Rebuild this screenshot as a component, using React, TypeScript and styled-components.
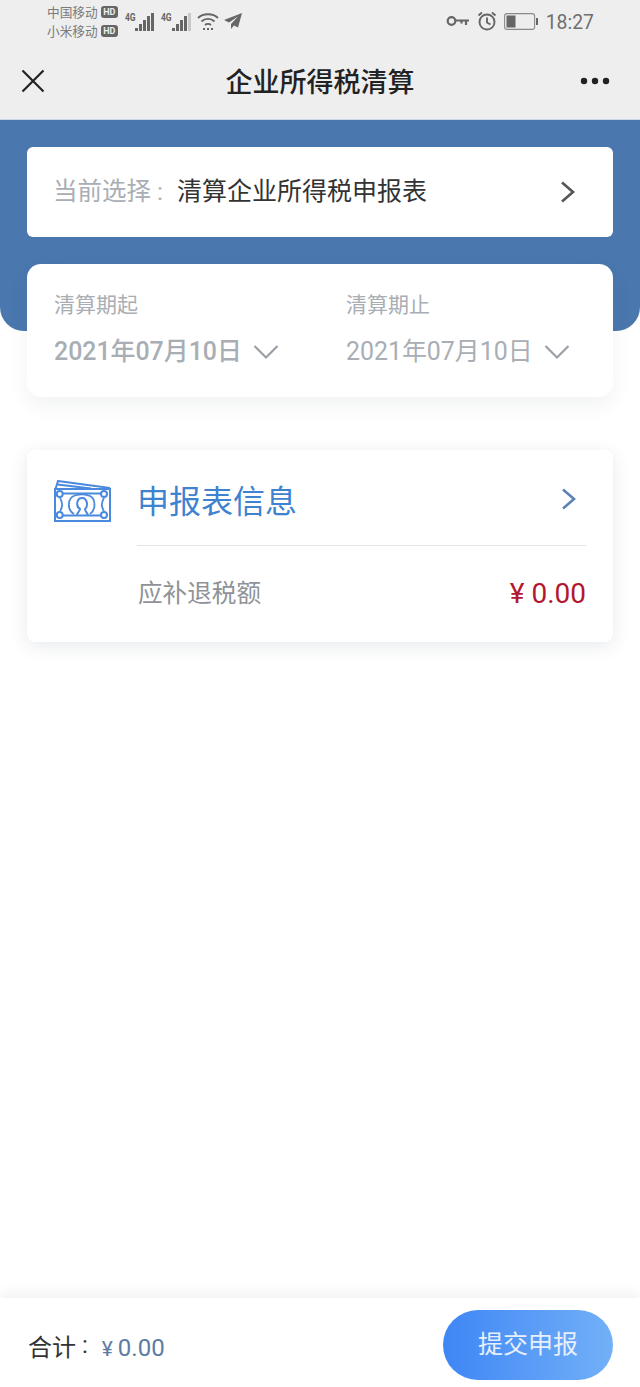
import styled, { createGlobalStyle } from "styled-components";

const GlobalStyle = createGlobalStyle`
  html, body {
    margin: 0;
    padding: 0;
    background: #ffffff;
  }
  * {
    box-sizing: border-box;
  }
`;

const Page = styled.div`
  width: 640px;
  height: 1387px;
  display: flex;
  flex-direction: column;
  overflow: hidden;
  background: #ffffff;
  font-family: Roboto, "Noto Sans CJK SC", sans-serif;
`;

const TopArea = styled.div`
  height: 120px;
  display: flex;
  flex-direction: column;
  background: #eeeeee;
  border-bottom: 1px solid #c9d6e6;
`;

const StatusBar = styled.div`
  height: 42px;
  padding: 0 46px 0 47px;
  display: flex;
  align-items: center;
  justify-content: space-between;
  color: #777777;
`;

const StatusLeft = styled.div`
  display: flex;
  align-items: center;
`;

const StatusRight = styled.div`
  display: flex;
  align-items: center;
  gap: 7px;
`;

const Carriers = styled.div`
  display: flex;
  flex-direction: column;
  margin-right: 6px;
`;

const Carrier = styled.div`
  display: flex;
  align-items: center;
  gap: 3px;
  height: 19px;
  font-size: 12.7px;
  color: #7b7b7b;
`;

const HdBadge = styled.span`
  width: 17px;
  height: 12px;
  border-radius: 3px;
  background: #666666;
  color: #eeeeee;
  font-size: 9px;
  font-weight: 700;
  line-height: 12px;
  text-align: center;
`;

const Signal = styled.div`
  display: flex;
  align-items: flex-end;
  gap: 1px;
  height: 19px;
  margin-right: 6px;
`;

const NetLabel = styled.span`
  align-self: flex-start;
  margin-right: -2px;
  font-size: 10px;
  font-weight: 700;
  line-height: 12px;
  color: #666666;
  transform: scaleX(0.85);
`;

const Bar = styled.span<{ $h: number; $dim?: boolean }>`
  width: 3px;
  height: ${(p) => p.$h}px;
  background: ${(p) => (p.$dim ? "#c8c8c8" : "#666666")};
`;

const PlaneIcon = styled.svg`
  margin-left: 5px;
`;

const Clock = styled.span`
  margin: 2px 0 0 1px;
  font-size: 19.4px;
  color: #6f6f6f;
`;

const NavBar = styled.div`
  flex: 1;
  padding: 0 30px;
  display: grid;
  grid-template-columns: 1fr auto 1fr;
  align-items: center;
`;

const NavClose = styled.div`
  display: flex;
  margin-left: -9px;
`;

const NavTitle = styled.div`
  font-size: 27px;
  font-weight: 500;
  color: #222222;
`;

const NavMore = styled.div`
  display: flex;
  justify-content: flex-end;
`;

const Hero = styled.div`
  height: 211px;
  padding: 27px 27px 0;
  display: flex;
  flex-direction: column;
  gap: 27px;
  background: #4a77ae;
  border-radius: 0 0 24px 24px;
`;

const SelectCard = styled.div`
  flex: none;
  height: 90px;
  padding: 0 38px 0 26px;
  display: flex;
  align-items: center;
  background: #ffffff;
  border-radius: 6px;
  font-size: 25px;
`;

const SelectLabel = styled.span`
  margin: 0 14px 6px 0;
  color: #a9aeb4;
  font-size: 24.5px;
`;

const Colon = styled.span`
  margin-left: 6px;
`;

const SelectValue = styled.span`
  flex: 1;
  margin-bottom: 6px;
  color: #333333;
`;

const DateCard = styled.div`
  flex: none;
  height: 133px;
  padding: 26px 27px 0;
  display: grid;
  grid-template-columns: 292px 1fr;
  background: #ffffff;
  border-radius: 14px;
  box-shadow: 0 8px 20px rgba(60, 70, 90, 0.07);
`;

const DateField = styled.div`
  display: flex;
  flex-direction: column;
  gap: 14px;
`;

const DateLabel = styled.div`
  font-size: 21px;
  line-height: 30px;
  color: #a9aeb4;
`;

const DateValue = styled.div<{ $light?: boolean }>`
  display: flex;
  align-items: center;
  gap: 11px;
  font-size: 24.9px;
  line-height: 36px;
  font-weight: ${(p) => (p.$light ? 400 : 500)};
  color: #a8aeb4;
`;

const Content = styled.div`
  flex: 1;
  padding: 119px 27px 0;
`;

const InfoCard = styled.div`
  height: 192px;
  padding: 0 27px 0 26px;
  display: grid;
  grid-template-columns: 84px 1fr;
  background: #ffffff;
  border-radius: 8px;
  box-shadow: 0 4px 18px rgba(60, 70, 90, 0.12);
`;

const IconCell = styled.div`
  padding-top: 30px;
`;

const InfoBody = styled.div`
  display: flex;
  flex-direction: column;
`;

const InfoHead = styled.div`
  height: 96px;
  display: flex;
  align-items: center;
  justify-content: space-between;
  border-bottom: 1px solid #e2e4e6;
  padding: 3px 10px 0 0;
`;

const InfoTitle = styled.div`
  font-size: 32px;
  color: #3f82d0;
`;

const InfoRow = styled.div`
  flex: 1;
  display: flex;
  align-items: center;
  justify-content: space-between;
`;

const InfoLabel = styled.div`
  margin: 0 0 7px 1px;
  font-size: 24.6px;
  color: #8f9398;
`;

const Amount = styled.div`
  margin-bottom: 2px;
  font-size: 28px;
  color: #b3172f;
`;

const Footer = styled.div`
  height: 89px;
  padding: 12px 27px 7px 28px;
  display: flex;
  align-items: center;
  justify-content: space-between;
  background: #ffffff;
  box-shadow: 0 -4px 12px rgba(40, 40, 40, 0.07);
`;

const Total = styled.div`
  display: flex;
  align-items: center;
  font-size: 24px;
  color: #333333;
`;

const TotalValue = styled.span`
  margin: 5px 0 0 14px;
  font-size: 24px;
  color: #5d7ba3;
`;

const Yen = styled.span`
  margin-right: 5px;
  font-size: 21px;
`;

const SubmitButton = styled.button`
  width: 170px;
  height: 70px;
  border: 0;
  border-radius: 35px;
  background: linear-gradient(90deg, #3f86f6, #72b0f7);
  color: #e6f0fd;
  font-family: inherit;
  font-size: 25px;
  padding: 0 0 6px;
`;

const Signals = ({ dim }: { dim: number }) => (
  <Signal>
    <NetLabel>4G</NetLabel>
    {[3, 7, 11, 15, 18].map((h, i) => (
      <Bar key={h} $h={h} $dim={i >= 5 - dim} />
    ))}
  </Signal>
);

const DateChevron = () => (
  <svg width="26" height="16" viewBox="0 0 26 16" fill="none" stroke="#9aa0a6" strokeWidth="2.2">
    <path d="M1.5 2 L13 13.5 L24.5 2" />
  </svg>
);

const RightChevron = ({ color }: { color: string }) => (
  <svg width="15" height="24" viewBox="0 0 15 24" fill="none" stroke={color} strokeWidth="2.6">
    <path d="M2 2.5 L13 12 L2 21.5" />
  </svg>
);

const MoneyIcon = () => (
  <svg width="58" height="42" viewBox="0 0 58 42" fill="none" stroke="#4a8ade" strokeWidth="2">
    <path d="M2 9 H57 V41 H2 Z" />
    <path d="M2.5 9 L5 1 L57 8" />
    <path d="M4.5 4.5 L38 8.5" />
    <circle cx="6.7" cy="14" r="3" />
    <circle cx="51" cy="14" r="3" />
    <circle cx="6.7" cy="35" r="3" />
    <circle cx="51" cy="35" r="3" />
    <path d="M10 13.5 H48 M10 35.5 H48" strokeWidth="1.8" />
    <path d="M7 18 C10 23 10 27 7 31 M51 18 C48 23 48 27 51 31" strokeWidth="1.8" />
    <path d="M21 34 C14 30 14 18 22 15.5 C27 14 33 14 37 16 C43 19 43 30 37 34" strokeWidth="1.8" />
    <path d="M24 35 C25 31 27 31 27 29 C23 27 23 18 29 18 C35 18 35 27 32 29 C32 31 33 31 35 35" />
  </svg>
);

export default function App() {
  return (
    <Page>
      <GlobalStyle />
      <TopArea>
        <StatusBar>
          <StatusLeft>
            <Carriers>
              <Carrier>中国移动<HdBadge>HD</HdBadge></Carrier>
              <Carrier>小米移动<HdBadge>HD</HdBadge></Carrier>
            </Carriers>
            <Signals dim={0} />
            <Signals dim={1} />
            <svg width="22" height="18" viewBox="0 0 22 18" fill="none" stroke="#666666" strokeWidth="1.8">
              <path d="M1 6 C6 1 16 1 21 6" />
              <path d="M4.5 9.5 C8 6 14 6 17.5 9.5" />
              <path d="M8 13 C9.5 11.5 12.5 11.5 14 13" />
              <path d="M6 17 H8 M10 17 H12 M14 17 H16" strokeWidth="2" />
            </svg>
            <PlaneIcon width="18" height="16" viewBox="0 0 18 16" fill="#666666">
              <path d="M18 0 L0 7 L5 9.5 L14 3.5 L7 11 L7 16 L10 12.5 L14 14.5 Z" />
            </PlaneIcon>
          </StatusLeft>
          <StatusRight>
            <svg width="24" height="12" viewBox="0 0 24 12" fill="none" stroke="#666666" strokeWidth="2.2">
              <circle cx="5.5" cy="6" r="3.8" />
              <path d="M9.5 5.5 H23 M20 5.5 V10 M15.5 5.5 V8.5" />
            </svg>
            <svg width="20" height="20" viewBox="0 0 20 20" fill="none" stroke="#666666" strokeWidth="1.9">
              <circle cx="10" cy="11" r="7.5" />
              <path d="M10 6.5 V11.5 L13.5 13.5 M1.5 4.5 L5 1.5 M18.5 4.5 L15 1.5" />
            </svg>
            <svg width="34" height="17" viewBox="0 0 34 17" fill="none">
              <rect x="0.6" y="0.6" width="30" height="15.8" rx="2.5" stroke="#8a8a8a" strokeWidth="1.1" />
              <rect x="2.5" y="2.5" width="9" height="12" fill="#666666" />
              <rect x="32" y="5" width="2" height="7" fill="#666666" />
            </svg>
            <Clock>18:27</Clock>
          </StatusRight>
        </StatusBar>
        <NavBar>
          <NavClose>
            <svg width="24" height="24" viewBox="0 0 24 24" fill="none" stroke="#222222" strokeWidth="2.2">
              <path d="M1.5 1.5 L22.5 22.5 M22.5 1.5 L1.5 22.5" />
            </svg>
          </NavClose>
          <NavTitle>企业所得税清算</NavTitle>
          <NavMore>
            <svg width="30" height="8" viewBox="0 0 30 8" fill="#222222">
              <circle cx="4" cy="4" r="3.2" />
              <circle cx="15" cy="4" r="3.2" />
              <circle cx="26" cy="4" r="3.2" />
            </svg>
          </NavMore>
        </NavBar>
      </TopArea>

      <Hero>
        <SelectCard>
          <SelectLabel>当前选择<Colon>:</Colon></SelectLabel>
          <SelectValue>清算企业所得税申报表</SelectValue>
          <RightChevron color="#555555" />
        </SelectCard>
        <DateCard>
          <DateField>
            <DateLabel>清算期起</DateLabel>
            <DateValue>2021年07月10日<DateChevron /></DateValue>
          </DateField>
          <DateField>
            <DateLabel>清算期止</DateLabel>
            <DateValue $light>2021年07月10日<DateChevron /></DateValue>
          </DateField>
        </DateCard>
      </Hero>

      <Content>
        <InfoCard>
          <IconCell>
            <MoneyIcon />
          </IconCell>
          <InfoBody>
            <InfoHead>
              <InfoTitle>申报表信息</InfoTitle>
              <RightChevron color="#5b83b5" />
            </InfoHead>
            <InfoRow>
              <InfoLabel>应补退税额</InfoLabel>
              <Amount>¥ 0.00</Amount>
            </InfoRow>
          </InfoBody>
        </InfoCard>
      </Content>

      <Footer>
        <Total>
          合计<Colon>:</Colon>
          <TotalValue><Yen>¥</Yen>0.00</TotalValue>
        </Total>
        <SubmitButton>提交申报</SubmitButton>
      </Footer>
    </Page>
  );
}
